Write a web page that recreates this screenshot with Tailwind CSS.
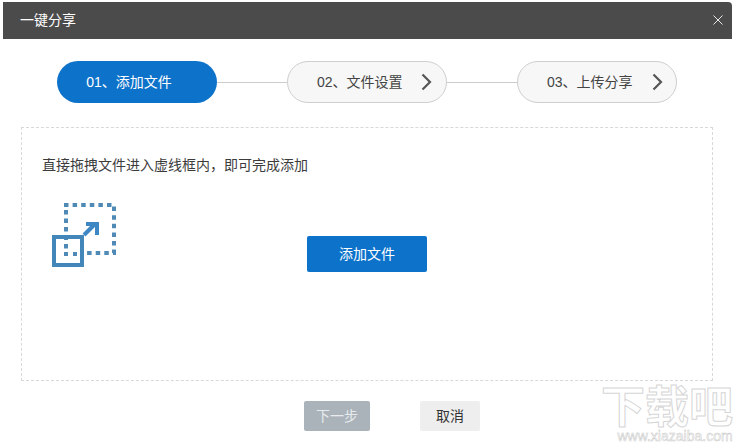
<!DOCTYPE html>
<html><head><meta charset="utf-8">
<script src="https://cdn.jsdelivr.net/npm/@tailwindcss/browser@4"></script>
</head>
<body class="bg-white">
<div class="relative w-[734px] h-[443px] overflow-hidden bg-white pt-[2px] pl-[3px] pr-[2px] font-['Liberation_Sans','Noto_Sans_CJK_SC',sans-serif]">
  <div class="h-[37px] bg-[#4b4b4b] rounded-tr-[4px] flex items-center justify-between pl-[17px] pr-[9px] text-white text-[14px]">
    <span>一键分享</span>
    <svg class="w-[10px] h-[10px] mb-[1px]" viewBox="0 0 10 10"><path d="M0.5 0.5L9.5 9.5M9.5 0.5L0.5 9.5" stroke="#e8e8e8" stroke-width="1" fill="none"/></svg>
  </div>
  <div class="mt-[22px] ml-[54px] flex items-center">
    <div class="w-[160px] h-[42px] rounded-full bg-[#0d72ca] text-white text-[14px] flex items-center justify-center pr-[16px]">01、添加文件</div>
    <div class="w-[70px] h-px bg-[#cccccc]"></div>
    <div class="w-[160px] h-[42px] rounded-full bg-[#f7f7f7] border border-[#cfcfcf] text-[#444444] text-[14px] flex items-center pl-[29px]">
      <span class="w-[104px] whitespace-nowrap">02、文件设置</span>
      <svg class="w-[11px] h-[18px]" viewBox="0 0 11 18"><path d="M1.5 1.5L9 9L1.5 16.5" stroke="#555555" stroke-width="2.2" fill="none"/></svg>
    </div>
    <div class="w-[70px] h-px bg-[#cccccc]"></div>
    <div class="w-[160px] h-[42px] rounded-full bg-[#f7f7f7] border border-[#cfcfcf] text-[#444444] text-[14px] flex items-center pl-[29px]">
      <span class="w-[105px] whitespace-nowrap">03、上传分享</span>
      <svg class="w-[11px] h-[18px]" viewBox="0 0 11 18"><path d="M1.5 1.5L9 9L1.5 16.5" stroke="#555555" stroke-width="2.2" fill="none"/></svg>
    </div>
  </div>
  <div class="mt-[24px] ml-[18px] w-[692px] h-[254px] border border-dashed border-[#d8d8d8] relative pt-[27px] pl-[20px]">
    <p class="text-[14px] leading-[20px] text-[#3c3c3c]">直接拖拽文件进入虚线框内，即可完成添加</p>
    <svg class="mt-[28px] ml-[10px] w-[66px] h-[66px]" viewBox="0 0 66 66" fill="none">
      <path d="M12 2H62V50H35" stroke="#4f8ab6" stroke-width="4" stroke-dasharray="4.5 4.1"/>
      <path d="M14 7V46" stroke="#4f8ab6" stroke-width="4" stroke-dasharray="4.5 4"/>
      <rect x="2" y="34" width="28" height="28" stroke="#4286ba" stroke-width="4"/>
      <rect x="12" y="49" width="4" height="4" fill="#4f8ab6"/>
      <rect x="21" y="49" width="4" height="4" fill="#4f8ab6"/>
      <path d="M32 32L43 21" stroke="#3d88c4" stroke-width="4"/>
      <path d="M34 21H45V32" stroke="#3d88c4" stroke-width="4"/>
    </svg>
    <button class="absolute left-[285px] top-[108px] w-[120px] h-[36px] rounded-[2px] bg-[#0d72ca] text-white text-[14px]">添加文件</button>
  </div>
  <div class="mt-[20px] ml-[301px] flex gap-[50px]">
    <button class="w-[66px] h-[30px] rounded-[2px] bg-[#abb3ba] text-[#e8ebee] text-[14px]">下一步</button>
    <button class="w-[60px] h-[30px] rounded-[2px] bg-[#eeeeee] text-[#333333] text-[14px]">取消</button>
  </div>
  <div class="absolute right-[0px] bottom-[0px] w-[134px] flex flex-col items-center">
    <div class="text-[44px] leading-[44px] font-bold text-white [-webkit-text-stroke:1px_#d6d6d6] whitespace-nowrap">下载吧</div>
    <div class="ml-[16px] text-[14px] leading-[13px] text-white [-webkit-text-stroke:0.5px_#c8c8c8] whitespace-nowrap">www.xiazaiba.com</div>
  </div>
</div>
</body></html>
